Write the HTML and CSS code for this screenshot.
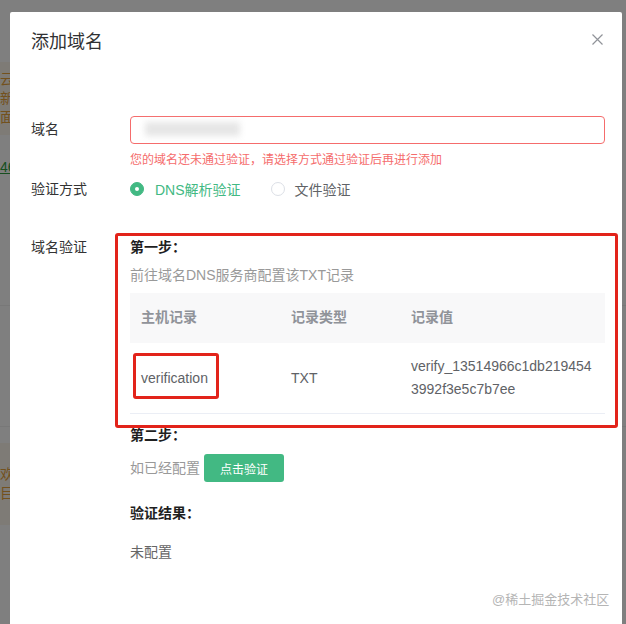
FILE: index.html
```html
<!DOCTYPE html>
<html lang="zh-CN">
<head>
  <meta charset="UTF-8" />
  <meta name="viewport" content="width=device-width, initial-scale=1.0">
  <title>添加域名</title>
  <link rel="stylesheet" href="styles.css">
</head>
<body>
  <!-- página de fondo, casi toda tapada por el diálogo -->
  <div class="page">
    <div class="tip">
      <p>云</p>
      <p>新</p>
      <p>面</p>
    </div>
    <a class="page-link" href="#">46</a>
    <div class="page-line"></div>
    <div class="tip tip-bottom">
      <p>欢</p>
      <p>目</p>
    </div>
  </div>

  <div class="mask"></div>

  <div class="dialog">
    <div class="dialog-header">
      <span class="dialog-title">添加域名</span>
      <button class="dialog-close" aria-label="关闭">
        <svg width="11" height="11" viewBox="0 0 11 11">
          <path d="M0.5 0.5 L10.5 10.5 M10.5 0.5 L0.5 10.5" stroke="#909399" stroke-width="1.2" fill="none" />
        </svg>
      </button>
    </div>

    <div class="dialog-body">
      <div class="form-item">
        <label class="form-label">域名</label>
        <div class="form-content">
          <div class="input is-error"><span class="masked"></span></div>
          <div class="form-error">您的域名还未通过验证，请选择方式通过验证后再进行添加</div>
        </div>
      </div>

      <div class="form-item item-method">
        <label class="form-label">验证方式</label>
        <div class="form-content radio-group">
          <span class="radio is-checked"><span class="radio-inner"></span>DNS解析验证</span>
          <span class="radio"><span class="radio-inner"></span>文件验证</span>
        </div>
      </div>

      <div class="form-item item-verify">
        <label class="form-label">域名验证</label>
        <div class="form-content">
          <div class="step-title">第一步：</div>
          <div class="step-desc">前往域名DNS服务商配置该TXT记录</div>
          <table class="record-table">
            <colgroup>
              <col style="width: 150px">
              <col style="width: 120px">
              <col>
            </colgroup>
            <thead>
              <tr>
                <th>主机记录</th>
                <th>记录类型</th>
                <th>记录值</th>
              </tr>
            </thead>
            <tbody>
              <tr>
                <td>verification</td>
                <td>TXT</td>
                <td class="value">verify_13514966c1db2194543992f3e5c7b7ee</td>
              </tr>
            </tbody>
          </table>

          <div class="step-title step-two">第二步：</div>
          <div class="check-row">
            <span class="step-desc">如已经配置</span>
            <button class="btn-check">点击验证</button>
          </div>

          <div class="step-title step-result">验证结果：</div>
          <div class="result">未配置</div>
        </div>
      </div>
    </div>

    <!-- marcas rojas de la captura -->
    <div class="mark mark-box"></div>
    <div class="mark mark-cell"></div>
    <div class="watermark">@稀土掘金技术社区</div>
  </div>
</body>
</html>
```

FILE: styles.css
```css
body {
  margin: 0;
  font-family: "Liberation Sans", "Noto Sans CJK SC", sans-serif;
  font-size: 14px;
  color: #606266;
  background: #fff;
  overflow: hidden;
}

/* Página de fondo */
.page {
  padding-top: 62px;
}

.tip {
  width: 240px;
  padding: 8px 0;
  background: #fdf6ec;
  color: #e6a23c;
  line-height: 19px;
}

.tip p {
  margin: 0;
}

.page-link {
  display: block;
  margin-top: 22px;
  color: #2e9e3f;
  line-height: 20px;
}

.page-line {
  margin-top: 128px;
  border-top: 1px solid #f0f0f0;
  height: 120px;
  border-bottom: 1px solid #f0f0f0;
}

.tip-bottom {
  margin-top: 16px;
  padding: 22px 0;
}

.mask {
  position: fixed;
  top: 0;
  left: 0;
  right: 0;
  bottom: 0;
  background: rgba(0, 0, 0, 0.5);
}

/* Diálogo */
.dialog {
  position: fixed;
  left: 10px;
  top: 12px;
  width: 612px;
  bottom: -10px;
  background: #fff;
  border-radius: 2px;
}

.dialog-header {
  padding: 18px 20px 0 21px;
  line-height: 24px;
}

.dialog-title {
  font-size: 18px;
  color: #303133;
}

.dialog-close {
  position: absolute;
  top: 22px;
  right: 19px;
  padding: 0;
  border: none;
  background: none;
  cursor: pointer;
  display: flex;
}

.dialog-body {
  padding: 61px 17px 0 21px;
}

.form-item {
  display: flex;
}

.form-label {
  width: 99px;
  flex: none;
  color: #333;
  line-height: 26px;
}

.form-content {
  flex: 1;
}

.input {
  height: 28px;
  box-sizing: border-box;
  border: 1px solid #dcdfe6;
  border-radius: 4px;
  padding: 5px 14px;
}

.input.is-error {
  border-color: #f56c6c;
}

.masked {
  display: block;
  width: 95px;
  height: 14px;
  background: #e6e6e6;
  filter: blur(3px);
}

.form-error {
  margin-top: 6px;
  font-size: 12px;
  line-height: 20px;
  color: #f56c6c;
}

.item-method {
  margin-top: 6px;
}

.radio-group {
  display: flex;
  align-items: center;
  height: 26px;
}

.radio {
  display: inline-flex;
  align-items: center;
  color: #606266;
  margin-right: 30px;
}

.radio-inner {
  width: 14px;
  height: 14px;
  box-sizing: border-box;
  border: 1px solid #dcdfe6;
  border-radius: 50%;
  margin-right: 10px;
  display: flex;
  align-items: center;
  justify-content: center;
}

.radio.is-checked {
  color: #42b983;
  margin-right: 30px;
}

.radio.is-checked .radio-inner {
  background: #42b983;
  border-color: #42b983;
  margin-right: 11px;
}

.radio.is-checked .radio-inner::after {
  content: "";
  width: 4px;
  height: 4px;
  border-radius: 50%;
  background: #fff;
}

.item-verify {
  margin-top: 34px;
}

.item-verify .form-label {
  line-height: 22px;
}

.step-title {
  font-weight: bold;
  color: #1f1f1f;
  line-height: 22px;
}

.step-desc {
  margin-top: 6px;
  color: #999;
  line-height: 22px;
}

.record-table {
  width: 100%;
  margin-top: 7px;
  border-collapse: collapse;
  table-layout: fixed;
}

.record-table th {
  text-align: left;
  font-weight: 600;
  color: #909399;
  background: #f8f8f9;
  padding: 13px 11px 14px;
  line-height: 23px;
}

.record-table td {
  padding: 12px 11px;
  line-height: 23px;
  border-bottom: 1px solid #ebeef5;
}

.record-table td.value {
  word-break: break-all;
}

.step-two {
  margin-top: 10px;
}

.check-row {
  display: flex;
  align-items: center;
  margin-top: 8px;
}

.check-row .step-desc {
  margin-top: 0;
}

.btn-check {
  margin-left: 4px;
  width: 80px;
  height: 28px;
  border: none;
  border-radius: 3px;
  background: #42b983;
  color: #fff;
  font-family: inherit;
  font-size: 12px;
  cursor: pointer;
}

.step-result {
  margin-top: 20px;
}

.result {
  margin-top: 17px;
  line-height: 22px;
  color: #666;
}

/* Anotaciones */
.mark {
  position: absolute;
  box-sizing: border-box;
  border: 3px solid #e2231a;
  border-radius: 3px;
}

.mark-box {
  left: 105px;
  top: 221px;
  width: 503px;
  height: 195px;
}

.mark-cell {
  left: 123px;
  top: 341px;
  width: 86px;
  height: 46px;
}

.watermark {
  position: absolute;
  left: 482px;
  top: 579px;
  font-size: 13px;
  line-height: 18px;
  color: #b5b5b5;
}
```
